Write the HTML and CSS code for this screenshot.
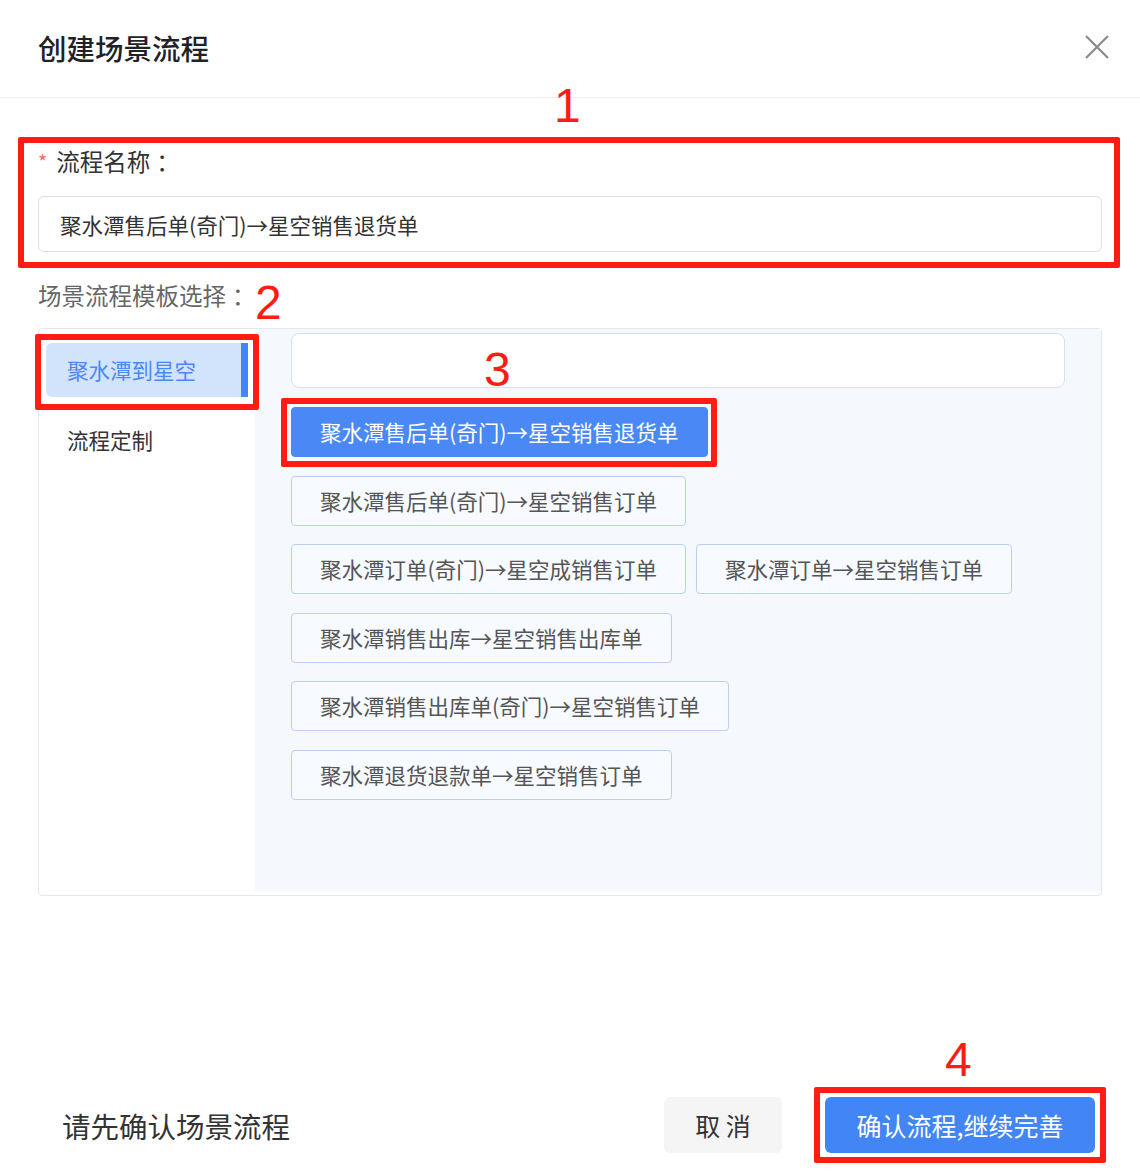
FILE: index.html
```html
<!DOCTYPE html>
<html lang="zh-CN">
<head>
    <meta charset="UTF-8">
    <meta name="viewport" content="width=device-width, initial-scale=1.0">
    <title>创建场景流程</title>
    <link rel="stylesheet" href="styles.css">
</head>
<body>
    <div class="page">
        <div class="dialog-header">
            <h1 class="dialog-title">创建场景流程</h1>
            <svg class="close-icon" width="24" height="24" viewBox="0 0 24 24">
                <path d="M1 1 L23 23 M23 1 L1 23" stroke="#8a8a8a" stroke-width="2.2" fill="none"/>
            </svg>
        </div>

        <div class="dialog-body">
            <div class="field">
                <label class="field-label"><span class="required">*</span>流程名称<span class="colon">：</span></label>
                <div class="text-input">聚水潭售后单(奇门)→星空销售退货单</div>
            </div>

            <div class="section-label">场景流程模板选择<span class="colon">：</span></div>

            <div class="template-panel">
                <!-- left category list -->
                <div class="category-list">
                    <div class="category active">聚水潭到星空</div>
                    <div class="category">流程定制</div>
                </div>

                <!-- right template buttons -->
                <div class="template-area">
                    <div class="search-input"></div>
                    <div class="template-list">
                        <div class="template-row">
                            <div class="template selected">聚水潭售后单(奇门)→星空销售退货单</div>
                        </div>
                        <div class="template-row">
                            <div class="template">聚水潭售后单(奇门)→星空销售订单</div>
                        </div>
                        <div class="template-row">
                            <div class="template">聚水潭订单(奇门)→星空成销售订单</div>
                            <div class="template">聚水潭订单→星空销售订单</div>
                        </div>
                        <div class="template-row">
                            <div class="template">聚水潭销售出库→星空销售出库单</div>
                        </div>
                        <div class="template-row">
                            <div class="template">聚水潭销售出库单(奇门)→星空销售订单</div>
                        </div>
                        <div class="template-row">
                            <div class="template">聚水潭退货退款单→星空销售订单</div>
                        </div>
                    </div>
                </div>
            </div>
        </div>

        <div class="dialog-footer">
            <div class="footer-tip">请先确认场景流程</div>
            <div class="footer-actions">
                <button class="btn btn-cancel">取 消</button>
                <button class="btn btn-primary">确认流程,继续完善</button>
            </div>
        </div>

        <!-- red annotation marks drawn over the screenshot -->
        <div class="mark mark-1"></div>
        <div class="mark mark-2"></div>
        <div class="mark mark-3"></div>
        <div class="mark mark-4"></div>
        <div class="mark-num num-1">1</div>
        <div class="mark-num num-2">2</div>
        <div class="mark-num num-3">3</div>
        <div class="mark-num num-4">4</div>
    </div>
</body>
</html>
```

FILE: styles.css
```css
body {
    margin: 0;
    padding: 0;
    background-color: #fff;
    font-family: "Noto Sans CJK SC", "Noto Sans", sans-serif;
    color: #333;
}

.page {
    position: relative;
    width: 1140px;
    height: 1172px;
    overflow: hidden;
}

/* header */
.dialog-header {
    height: 97px;
    display: flex;
    align-items: center;
    justify-content: space-between;
    padding: 0 31px 0 38px;
    border-bottom: 1px solid #eeeeee;
}

.dialog-title {
    margin: 0;
    font-size: 28.5px;
    font-weight: 500;
    color: #1f2329;
    line-height: 1;
}

.close-icon {
    margin-top: -4px;
}

/* body */
.dialog-body {
    padding: 0 38px;
}

.field {
    padding-top: 48px;
}

.field-label {
    display: flex;
    align-items: center;
    height: 30px;
    font-size: 23.5px;
    color: #333;
}

.required {
    color: #f56c6c;
    font-size: 20px;
    margin-right: 9px;
}

.colon {
    margin-left: 6px;
}

.text-input {
    margin-top: 20px;
    height: 54px;
    border: 1px solid #dcdfe6;
    border-radius: 6px;
    padding: 0 21px;
    display: flex;
    align-items: center;
    font-size: 21.5px;
    color: #333;
}

.section-label {
    margin-top: 28px;
    height: 30px;
    line-height: 30px;
    font-size: 23.5px;
    color: #666;
}

.template-panel {
    margin-top: 18px;
    height: 566px;
    display: flex;
    border: 1px solid #e4e7ed;
    border-radius: 4px;
}

.category-list {
    width: 202px;
    padding: 14px 7px 0 7px;
}

.category {
    height: 54px;
    line-height: 54px;
    padding-left: 21px;
    margin-bottom: 16px;
    font-size: 21.5px;
    color: #333;
    border-radius: 6px 0 0 6px;
}

.category.active {
    background-color: #d2e3fc;
    color: #4a88f5;
    box-shadow: inset -7px 0 0 #4285f4;
}

.template-area {
    flex: 1;
    background-color: #f5f8fc;
    padding: 4px 36px 0 36px;
    margin-bottom: 4px;
}

.search-input {
    height: 53px;
    background-color: #fff;
    border: 1px solid #dcdfe6;
    border-radius: 8px;
}

.template-list {
    margin-top: 19px;
    display: flex;
    flex-direction: column;
    gap: 18.6px;
}

.template-row {
    display: flex;
    gap: 10px;
}

.template {
    height: 48px;
    line-height: 48px;
    padding: 0 28px;
    border: 1px solid #b8d0f6;
    border-radius: 4px;
    background-color: #f7faff;
    font-size: 21.5px;
    color: #555;
    white-space: nowrap;
}

.template.selected {
    background-color: #4a88f5;
    border-color: #4a88f5;
    color: #fff;
}

/* footer */
.dialog-footer {
    margin-top: 201px;
    display: flex;
    align-items: center;
    justify-content: space-between;
    padding: 0 45px 0 62px;
}

.footer-tip {
    font-size: 28.5px;
    color: #333;
}

.footer-actions {
    display: flex;
    gap: 43px;
}

.btn {
    height: 56px;
    border: none;
    border-radius: 6px;
    font-family: "Noto Sans CJK SC", sans-serif;
    font-size: 25px;
    cursor: pointer;
}

.btn-cancel {
    width: 118px;
    background-color: #f5f5f5;
    color: #333;
}

.btn-primary {
    width: 270px;
    background-color: #4285f4;
    color: #fff;
}

/* annotations */
.mark {
    position: absolute;
    border: 6px solid #fe1c14;
    border-radius: 2px;
}

.mark-1 { left: 18px; top: 137px; width: 1090px; height: 119px; }
.mark-2 { left: 35px; top: 334px; width: 212px; height: 64px; }
.mark-3 { left: 281px; top: 398px; width: 424px; height: 57px; }
.mark-4 { left: 814px; top: 1087px; width: 280px; height: 64px; }

.mark-num {
    position: absolute;
    font-family: "Liberation Sans", sans-serif;
    font-size: 48px;
    line-height: 1;
    color: #fe1c14;
}

.num-1 { left: 554px; top: 82px; }
.num-2 { left: 255px; top: 279px; }
.num-3 { left: 484px; top: 346px; }
.num-4 { left: 945px; top: 1036px; }
```
